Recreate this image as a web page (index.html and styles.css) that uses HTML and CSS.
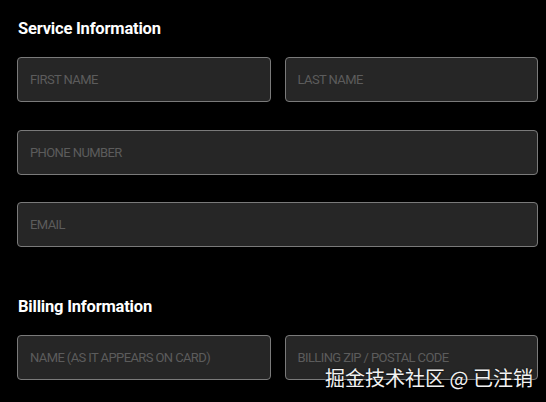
FILE: index.html
```html
<!DOCTYPE html>
<html lang="en">
<head>
<meta charset="utf-8">
<title>Checkout Form</title>
<link rel="stylesheet" href="styles.css">
</head>
<body>
<main class="form">
  <h2 class="section-title">Service Information</h2>
  <div class="fields">
    <div class="row two">
      <div class="field"><span class="ph">FIRST NAME</span></div>
      <div class="field"><span class="ph">LAST NAME</span></div>
    </div>
    <div class="field"><span class="ph">PHONE NUMBER</span></div>
    <div class="field"><span class="ph">EMAIL</span></div>
  </div>
  <h2 class="section-title billing">Billing Information</h2>
  <div class="fields">
    <div class="row two">
      <div class="field"><span class="ph">NAME (AS IT APPEARS ON CARD)</span></div>
      <div class="field"><span class="ph">BILLING ZIP / POSTAL CODE</span></div>
    </div>
  </div>
</main>
<div class="watermark">掘金技术社区 @ 已注销</div>
</body>
</html>
```
FILE: styles.css
```css
html, body {
  margin: 0;
  padding: 0;
  background: #000;
  height: 100%;
  overflow: hidden;
}
body {
  font-family: Roboto, "Liberation Sans", sans-serif;
  position: relative;
}
.form {
  padding: 19px 8px 0 17px;
}
.section-title {
  margin: 0 0 18px 1px;
  font-size: 16.5px;
  line-height: 20px;
  font-weight: 700;
  color: #fff;
  letter-spacing: -0.2px;
}
.section-title.billing {
  margin-top: 50px;
}
.fields {
  display: flex;
  flex-direction: column;
  gap: 27.5px;
}
.row.two {
  display: grid;
  grid-template-columns: 1fr 1fr;
  column-gap: 14px;
}
.field {
  box-sizing: border-box;
  height: 45px;
  background: #262626;
  border: 1px solid #7a7a7a;
  border-radius: 4px;
  display: flex;
  align-items: center;
  padding: 0 12px;
}
.ph {
  font-size: 13px;
  color: #5c5c5c;
  letter-spacing: -0.6px;
  white-space: nowrap;
}
.watermark {
  position: absolute;
  right: 13px;
  bottom: 12px;
  font-family: "Noto Sans CJK SC", sans-serif;
  font-size: 20px;
  line-height: 24px;
  color: #f2f2f2;
  text-shadow: 0 0 2px rgba(0,0,0,0.8);
}
```
